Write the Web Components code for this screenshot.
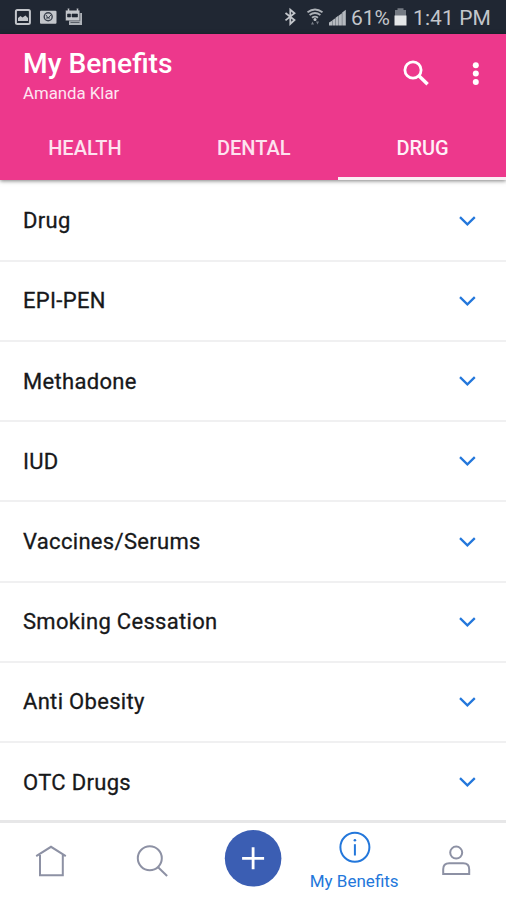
<!DOCTYPE html>
<html lang="en">
<head>
<meta charset="utf-8">
<title>My Benefits</title>
<style>
html,body{margin:0;height:100%;background:#fff;font-family:Roboto,"Noto Sans",sans-serif}
body{overflow:hidden}
</style>
</head>
<body>
<benefits-app></benefits-app>
<script>
function define(name, html, setup) {
  customElements.define(name, class extends HTMLElement {
    constructor() {
      super();
      this.attachShadow({ mode: 'open' }).innerHTML = html;
    }
    connectedCallback() { if (setup) setup(this, this.shadowRoot); }
  });
}

define('status-bar', `
<style>
:host{display:flex;box-sizing:border-box;height:34px;background:#202733;color:#c3c6cb;align-items:center;padding:0 14px 0 14px;font-size:21px;line-height:34px}
svg{display:block;flex:none}
.gap{flex:1}
.pct{margin-left:4px;width:43px;letter-spacing:0;white-space:nowrap}
.time{margin-left:6px;width:79px;white-space:nowrap;letter-spacing:.1px}
span{padding-top:2px}
</style>
<svg width="70" height="34" viewBox="14 0 70 34">
  <rect x="15.9" y="9.9" width="14" height="14" rx="1.5" fill="none" stroke="#c3c6cb" stroke-width="2"/>
  <path d="M18 21v-3l2.5-2 2 1.5 3-2L28 18v3z" fill="#c3c6cb"/>
  <path d="M41 10.8h14.5q1 0 1 1v11q0 1-1 1H41q-1 0-1-1v-11q0-1 1-1z" fill="#c3c6cb"/>
  <circle cx="48.2" cy="16.8" r="4" fill="none" stroke="#3b424e" stroke-width="1.4"/>
  <path d="M46 15l2 3 3-3M46 18h4" fill="none" stroke="#3b424e"/>
  <path d="M69 13h13v12H69z" fill="#aeb2b8"/>
  <path d="M65.5 10.2h2V8.3h2v1.9h7V8.3h2v1.9h1.3v10.6H65.5z" fill="#c3c6cb" stroke="#202733" stroke-width=".5"/>
  <path d="M67.5 14h3v3h-3zM72 14h5.5v3H72zM70.5 22.5h9" fill="#202733" stroke="#202733" stroke-width=".6"/>
</svg>
<div class="gap"></div>
<svg width="64" height="34" viewBox="282 0 64 34">
  <path d="M284.5 13l9 7-4.2 4V9.6l4.2 3.6-9 7.2" fill="none" stroke="#c3c6cb" stroke-width="1.8"/>
  <g fill="none" stroke="#aeb2b8" stroke-width="1.8"><path d="M306.5 12.2q7.5-5.4 15 0M308.6 15q5.4-4 10.8 0M311 17.8q3-2.3 6 0"/></g>
  <circle cx="314" cy="19.5" r="1.5" fill="#c3c6cb"/>
  <path d="M310 24.5l1.5-3 1.5 3zM315 21.5h3l-1.5 3z" fill="#777d86"/>
  <path d="M328 25.5v-3l3-1.8v4.8zM331.3 25.5v-5.3l3-2v7.3zM334.6 25.5v-7.8l3-2.2v10zM337.9 25.5v-10l3-2.3v12.3zM341.2 25.5v-13l3.6-2.7v15.7z" fill="#b5b9bf"/>
</svg>
<span class="pct">61%</span>
<svg width="13" height="34" viewBox="0 0 13 34"><path d="M3.5 8.3h6V10H12v7H1v-7h2.5z" fill="#747a83"/><path d="M.5 15.5h12v10H.5z" fill="#e4e6e8"/></svg>
<span class="time">1:41 PM</span>`);

define('tab-item', `
<style>
:host{display:flex;flex:1;align-items:center;justify-content:center;color:#fde3ef;font-size:20px;font-weight:500;box-sizing:border-box;border-bottom:3px solid transparent;padding-top:3px}
:host([active]){border-bottom-color:#fbeff5;color:#fff0f7}
</style><slot></slot>`);

define('app-header', `
<style>
:host{display:flex;flex-direction:column;height:146.4px;background:#ed388c;color:#fff;box-shadow:0 1px 4px rgba(0,0,0,.5);position:relative}
.top{display:flex;height:82px;padding-left:23px}
.titles{flex:1}
h1{margin:12px 0 0;font-size:28.2px;font-weight:500;line-height:36px;white-space:nowrap}
p{margin:1px 0 0;font-size:16.8px;line-height:20px;color:#fde6f1}
svg{display:block}
.tabs{display:flex;flex:1;margin-right:-1px;padding-left:.5px}
</style>
<div class="top"><div class="titles"><h1><slot name="title"></slot></h1><p><slot name="member"></slot></p></div>
<svg width="106" height="82" viewBox="400 34 106 82"><circle cx="413" cy="70" r="8.1" fill="none" stroke="#fff" stroke-width="2.8"/><path d="M418.6 75.6l9 8.7" stroke="#fff" stroke-width="3.5"/><g fill="#fff"><circle cx="475.8" cy="65.3" r="3"/><circle cx="475.8" cy="73.6" r="3"/><circle cx="475.8" cy="82" r="3"/></g></svg></div>
<div class="tabs"><slot></slot></div>`);

define('benefit-row', `
<style>
:host{display:flex;align-items:center;box-sizing:border-box;height:80.2px;flex:none;padding:0 30px 0 23px;border-bottom:2px solid #f0f0f1;color:#17181a;font-size:22px;letter-spacing:.31px;-webkit-text-stroke:.3px #17181a}
.t{flex:1;white-space:nowrap}
svg{display:block}
</style><span class="t"><slot></slot></span>
<svg width="17" height="12" viewBox="0 0 17 12"><path d="M1 2.2l7.4 7.1 7.4-7.1" fill="none" stroke="#2377db" stroke-width="2.3"/></svg>`);

const icons = {
  home: '<path d="M36.2 856.2L51 846.8l14.8 9.4M40 855v20.3h22.8V855" fill="none" stroke="#8d91a4" stroke-width="2"/>',
  search: '<circle cx="150" cy="858.3" r="12" fill="none" stroke="#8d91a4" stroke-width="2"/><path d="M158.3 867.2l9 8.8" stroke="#8d91a4" stroke-width="2"/>',
  add: '<circle cx="253.5" cy="858.3" r="28.3" fill="#3b5eb3"/><path d="M242.5 858.3h22M253.5 847.3v22" stroke="#fff" stroke-width="2.8"/>',
  info: '<circle cx="354.5" cy="847.3" r="14.5" fill="none" stroke="#2377db" stroke-width="2"/><path d="M354.5 844.2v11.3" stroke="#2377db" stroke-width="2"/><circle cx="354.5" cy="840.3" r="1.3" fill="#2377db"/>',
  person: '<g fill="none" stroke="#8d91a4" stroke-width="2"><circle cx="456" cy="852.6" r="6"/><path d="M443 874v-4.8q0-6 6-6h14q6 0 6 6v4.8z"/></g>'
};
define('nav-item', `
<style>
:host{display:block;flex:1;position:relative;height:77px;color:#2377db;font-size:17px;text-align:center}
svg{display:block;width:100%;height:77px}
span{position:absolute;left:0;right:0;top:48px;line-height:20px;white-space:nowrap}
</style><svg></svg><span><slot></slot></span>`, (host, root) => {
  const icon = host.getAttribute('icon');
  const i = Object.keys(icons).indexOf(icon);
  const svg = root.querySelector('svg');
  svg.setAttribute('viewBox', `${i * 101.2} 823 101.2 77`);
  svg.innerHTML = icons[icon];
});

define('bottom-nav', `
<style>
:host{display:flex;box-sizing:border-box;height:80px;border-top:3px solid #e7e7e8;background:#fff;position:absolute;left:0;right:0;bottom:0}
</style><slot></slot>`);

define('benefits-app', `
<style>
:host{display:flex;flex-direction:column;height:900px;width:506px;position:relative;overflow:hidden}
main{display:flex;flex-direction:column;flex:1;min-height:0;padding-top:1.3px}
</style>
<status-bar></status-bar>
<app-header><span slot="title">My Benefits</span><span slot="member">Amanda Klar</span>
<tab-item>HEALTH</tab-item><tab-item>DENTAL</tab-item><tab-item active>DRUG</tab-item></app-header>
<main>
<benefit-row>Drug</benefit-row><benefit-row>EPI-PEN</benefit-row><benefit-row>Methadone</benefit-row><benefit-row>IUD</benefit-row><benefit-row>Vaccines/Serums</benefit-row><benefit-row>Smoking Cessation</benefit-row><benefit-row>Anti Obesity</benefit-row><benefit-row>OTC Drugs</benefit-row>
</main>
<bottom-nav><nav-item icon="home"></nav-item><nav-item icon="search"></nav-item><nav-item icon="add"></nav-item><nav-item icon="info">My Benefits</nav-item><nav-item icon="person"></nav-item></bottom-nav>`);
</script>
</body>
</html>
